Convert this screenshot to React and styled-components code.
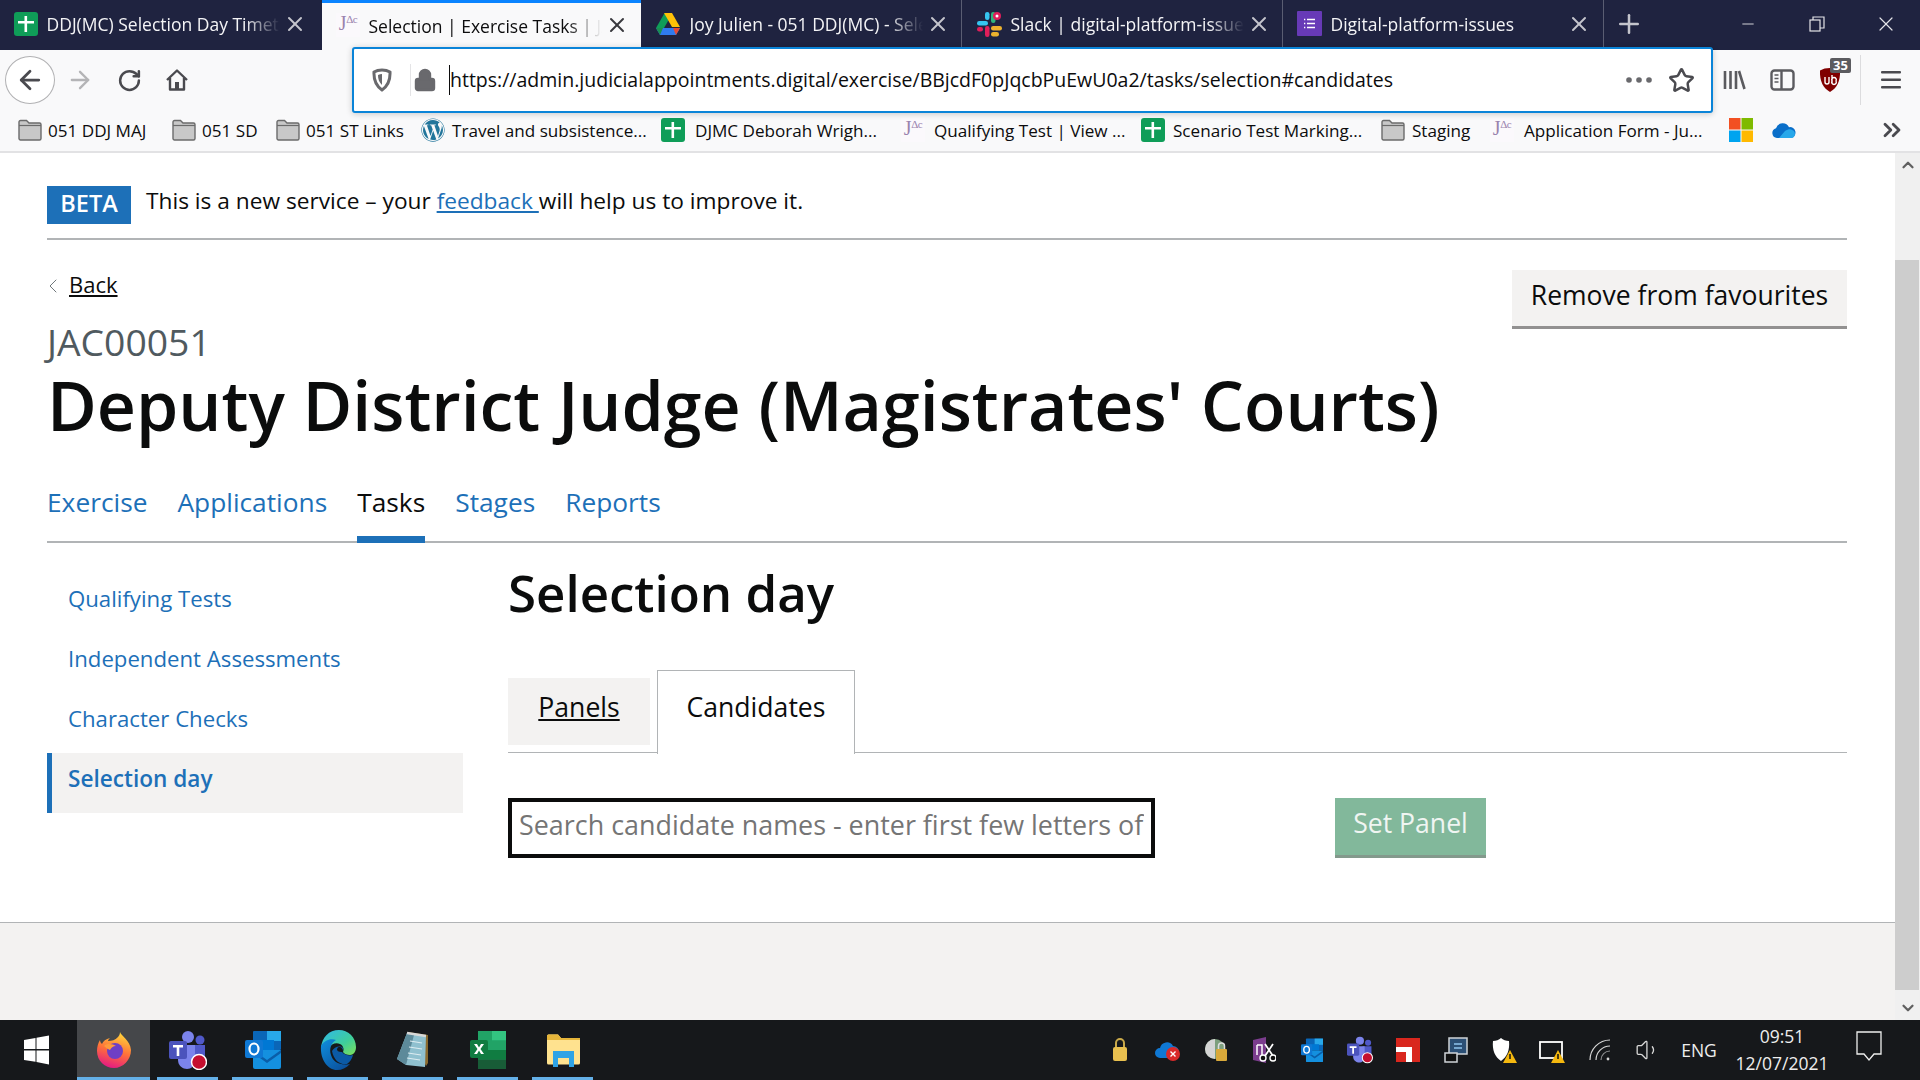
import styled, { createGlobalStyle } from "styled-components";
import { ArrowLeft, ArrowRight, RotateCw, Star, X, Plus, Minus, ChevronsRight, Lock, ChevronUp, ChevronDown, ChevronLeft, Volume1 } from "lucide-react";
import { FaWordpress } from "react-icons/fa";

const GlobalStyle = createGlobalStyle`
  html, body {
    margin: 0;
    height: 100%;
    overflow: hidden;
    font-family: "Open Sans", "Liberation Sans", sans-serif;
    color: #0b0c0c;
  }
  * { box-sizing: border-box; }
  a { text-decoration: none; }
`;

const Screen = styled.div`
  width: 1920px;
  height: 1080px;
  display: flex;
  flex-direction: column;
  overflow: hidden;
`;

/* browser tabs */
const TabStrip = styled.div`
  height: 50px;
  background: #1f2340;
  display: flex;
  flex-shrink: 0;
  color: #f4f4f6;
`;
const BrowserTab = styled.div`
  width: ${(p) => p.$w}px;
  height: ${(p) => (p.$active ? 50 : 47)}px;
  padding-left: 14px;
  padding-bottom: ${(p) => (p.$active ? 3 : 0)}px;
  display: flex;
  align-items: center;
  position: relative;
  font-size: 17.5px;
  background: ${(p) => (p.$active ? "#f9f9fa" : "transparent")};
  color: ${(p) => (p.$active ? "#0c0c0d" : "#f4f4f6")};
  border-top: ${(p) => (p.$active ? "3px solid #0a84ff" : "none")};
  border-right: ${(p) => (p.$active || p.$first ? "none" : "1px solid #5a5d72")};
`;
const TabTitle = styled.span`
  margin-left: 8.5px;
  width: 233px;
  padding-top: 1px;
  white-space: nowrap;
  overflow: hidden;
  -webkit-mask-image: linear-gradient(to right, #000 85%, transparent 100%);
`;
const TabClose = styled.span`
  margin-left: 3px;
  display: flex;
  color: ${(p) => (p.$active ? "#38383d" : "#c4c5cc")};
`;
const NewTab = styled.div`
  width: 50px;
  display: flex;
  align-items: center;
  justify-content: center;
  color: #c4c5cc;
  height: 47px;
`;
const WindowControls = styled.div`
  margin-left: auto;
  display: flex;
`;
const WindowButton = styled.div`
  width: 69px;
  height: 47px;
  display: flex;
  align-items: center;
  justify-content: center;
  color: #e4e4e8;
`;

/* url bar row */
const Toolbar = styled.div`
  height: 55px;
  flex-shrink: 0;
  background: #f9f9fa;
  display: flex;
  align-items: center;
  padding: 5px 0 0 5px;
  color: #5b5b5f;
  position: relative;
`;
const BackCircle = styled.div`
  width: 50px;
  height: 48px;
  border-radius: 50%;
  border: 1px solid #b1b1b3;
  background: #fff;
  display: flex;
  align-items: center;
  justify-content: center;
  color: #4a4a4f;
`;
const ToolButton = styled.div`
  width: ${(p) => p.$w || 48}px;
  display: flex;
  align-items: center;
  justify-content: center;
  color: ${(p) => p.$color || "#5b5b5f"};
  position: relative;
`;
const UrlBar = styled.div`
  position: absolute;
  left: 352px;
  top: -3px;
  width: 1361px;
  height: 66px;
  background: #fff;
  border: 2px solid #0a84d8;
  border-radius: 3px;
  box-shadow: 0 1px 6px rgba(0, 0, 0, 0.2);
  display: flex;
  align-items: center;
  z-index: 2;
`;
const UrlIcon = styled.span`
  width: ${(p) => p.$w}px;
  display: flex;
  justify-content: center;
  color: #69696d;
`;
const UrlDivider = styled.span`
  width: 1px;
  height: 32px;
  background: #e4e4e6;
`;
const UrlText = styled.div`
  flex: 1;
  margin-left: 10px;
  border-left: 1px solid #0c0c0d;
  font-size: 19.5px;
  line-height: 30px;
  color: #0c0c0d;
  white-space: nowrap;
`;
const ToolGroup = styled.div`
  margin-left: auto;
  display: flex;
  align-items: center;
  width: 210px;
`;
const Badge = styled.span`
  position: absolute;
  top: -9px;
  left: 24px;
  background: #5b5b5f;
  color: #fff;
  font-size: 13px;
  font-weight: 700;
  line-height: 15px;
  padding: 0 3px;
  border-radius: 2px;
`;
const ToolDivider = styled.span`
  width: 1px;
  height: 50px;
  background: #dcdcde;
  margin-left: 6px;
`;

/* bookmarks */
const BookmarkBar = styled.div`
  height: 48px;
  flex-shrink: 0;
  background: #f9f9fa;
  border-bottom: 2px solid #e2e2e4;
  display: flex;
  align-items: center;
  padding: 4px 0 0 18px;
  font-size: 17.1px;
  color: #0c0c0d;
`;
const Bookmark = styled.div`
  width: ${(p) => p.$w}px;
  display: flex;
  align-items: center;
  gap: ${(p) => p.$gap || 6}px;
  white-space: nowrap;
`;

/* page */
const Viewport = styled.div`
  flex: 1;
  display: flex;
  min-height: 0;
  background: #fff;
`;
const Page = styled.div`
  flex: 1;
  display: flex;
  flex-direction: column;
`;
const Wrapper = styled.div`
  flex: 1;
  padding: 33px 48px 0 47px;
`;
const PhaseBanner = styled.div`
  display: flex;
  align-items: flex-start;
  gap: 15px;
  padding-bottom: 14px;
  border-bottom: 2px solid #b1b4b6;
  font-size: 22.7px;
  line-height: 30px;
`;
const PhaseTag = styled.strong`
  background: #1d70b8;
  color: #fff;
  width: 84px;
  height: 38px;
  display: flex;
  align-items: center;
  justify-content: center;
  padding-bottom: 5px;
  font-size: 23.5px;
  font-weight: 600;
`;
const BlueLink = styled.a`
  color: #1d70b8;
  text-decoration: underline;
`;
const FavouriteButton = styled.button`
  float: right;
  margin-top: 30px;
  width: 335px;
  height: 59px;
  padding: 0 0 6px;
  background: #f3f2f1;
  border: none;
  border-bottom: 3px solid #929191;
  color: #0b0c0c;
  font-family: inherit;
  font-size: 26.5px;
`;
const BackLink = styled.a`
  padding-top: 28px;
  height: 60px;
  margin-bottom: 2px;
  display: flex;
  align-items: center;
  gap: 4px;
  font-size: 22px;
  color: #0b0c0c;
  span { text-decoration: underline; }
  svg { color: #6f777b; margin: 4px 0 0 -6px; }
`;
const Caption = styled.div`
  margin-top: 17px;
  font-size: 37.3px;
  line-height: 50px;
  color: #505a5f;
`;
const Title = styled.h1`
  margin: -2px 0 0;
  font-size: 68px;
  line-height: 80px;
  font-weight: 600;
  white-space: nowrap;
`;
const MainNav = styled.nav`
  margin-top: 30px;
  height: 68px;
  display: flex;
  gap: 30px;
  box-shadow: inset 0 -2px 0 #b1b4b6;
`;
const NavItem = styled.a`
  height: 68px;
  font-size: 26.3px;
  line-height: 54px;
  color: ${(p) => (p.$active ? "#0b0c0c" : "#1d70b8")};
  border-bottom: 7px solid ${(p) => (p.$active ? "#1d70b8" : "transparent")};
`;
const Columns = styled.div`
  display: grid;
  grid-template-columns: 416px 1fr;
  column-gap: 45px;
`;
const SideNav = styled.div`
  padding-top: 30px;
`;
const SideItem = styled.a`
  display: block;
  height: 60px;
  padding: 8px 0 0 16px;
  line-height: 36px;
  font-size: ${(p) => (p.$active ? 22.6 : 22.2)}px;
  color: #1d70b8;
  font-weight: ${(p) => (p.$active ? 600 : 400)};
  background: ${(p) => (p.$active ? "#f3f2f1" : "transparent")};
  border-left: 5px solid ${(p) => (p.$active ? "#1d70b8" : "transparent")};
`;
const SectionTitle = styled.h2`
  margin: 14px 0 0;
  font-size: 51px;
  line-height: 70px;
  font-weight: 600;
`;
const TabList = styled.div`
  margin-top: 43px;
  height: 83px;
  display: flex;
  align-items: flex-start;
  gap: 7px;
  box-shadow: inset 0 -1px 0 0 #b1b4b6;
`;
const PanelTab = styled.a`
  margin-top: 8px;
  width: 142px;
  height: 67px;
  background: #f3f2f1;
  display: flex;
  justify-content: center;
  padding-top: 10px;
  font-size: 26.6px;
  line-height: 38px;
  color: #0b0c0c;
  text-decoration: underline;
`;
const ActivePanelTab = styled.a`
  width: 198px;
  height: 84px;
  background: #fff;
  border: 1px solid #b1b4b6;
  border-bottom: none;
  display: flex;
  justify-content: center;
  padding-top: 17px;
  font-size: 26.6px;
  line-height: 38px;
  color: #0b0c0c;
`;
const SearchRow = styled.div`
  margin-top: 45px;
  display: flex;
  gap: 180px;
`;
const SearchInput = styled.input`
  width: 647px;
  height: 60px;
  border: 4px solid #0b0c0c;
  padding: 0 7px 8px;
  font-family: inherit;
  font-size: 26.9px;
  outline: none;
  &::placeholder { color: #757575; opacity: 1; }
`;
const SetPanelButton = styled.button`
  width: 151px;
  height: 60px;
  background: #82b89b;
  border: none;
  border-bottom: 3px solid #83998c;
  padding: 0 0 8px;
  color: #f0f5f2;
  font-family: inherit;
  font-size: 26.6px;
`;
const Footer = styled.div`
  height: 98px;
  flex-shrink: 0;
  background: #f3f2f1;
  border-top: 1px solid #b1b4b6;
`;
const Scrollbar = styled.div`
  width: 25px;
  background: #f0f0f0;
  display: flex;
  flex-direction: column;
  color: #606060;
`;
const ScrollArrow = styled.div`
  height: 24px;
  display: flex;
  align-items: center;
  justify-content: center;
  margin-top: ${(p) => (p.$bottom ? "auto" : 0)};
`;
const ScrollThumb = styled.div`
  margin: ${(p) => p.$top}px 1px 0 0;
  height: 730px;
  background: #cdcdcd;
`;

/* windows taskbar */
const Taskbar = styled.div`
  height: 60px;
  flex-shrink: 0;
  background: #16181b;
  display: flex;
  color: #eee;
`;
const StartButton = styled.div`
  width: 77px;
  display: flex;
  align-items: center;
  justify-content: center;
  padding-right: 5px;
`;
const TaskItem = styled.div`
  width: ${(p) => (p.$active ? 73 : 75)}px;
  display: flex;
  align-items: center;
  justify-content: center;
  position: relative;
  background: ${(p) => (p.$active ? "#45474a" : "transparent")};
  &::after {
    content: "";
    position: absolute;
    bottom: 0;
    height: 3px;
    left: ${(p) => (p.$active ? 0 : 7)}px;
    right: ${(p) => (p.$active ? 0 : 7)}px;
    background: #64b0e8;
  }
`;
const Tray = styled.div`
  margin-left: auto;
  display: flex;
  align-items: center;
  padding-right: 20px;
`;
const TrayIcon = styled.div`
  width: 48px;
  display: flex;
  justify-content: center;
`;
const TrayText = styled.div`
  width: ${(p) => p.$w}px;
  text-align: center;
  font-size: 17.5px;
  line-height: 27px;
  color: #eee;
`;

/* inline drawings */
const SheetIcon = ({ size = 24 }) => (
  <svg width={size} height={size} viewBox="0 0 24 24">
    <rect width="24" height="24" rx="3" fill="#0f9d58" />
    <path d="M10.500 4h2.600v5H20v2.600h-6.900V20h-2.600v-8.400H4V9h6.500z" fill="#fff" />
  </svg>
);
const DriveIcon = () => (
  <svg width="26" height="24" viewBox="0 0 26 24">
    <path d="M9 1h8l-8 14H1z" fill="#0f9d58" transform="translate(0 1)" />
    <path d="M9 1h8l8 14h-8z" fill="#ffc107" />
    <path d="M1 16h24l-4 7H5z" fill="#2f7bf0" />
    <path d="M1 16h7l-3 7z" fill="#1a8f50" />
    <path d="M18 16h7l-4 7z" fill="#e64a35" />
  </svg>
);
const SlackIcon = () => (
  <svg width="26" height="26" viewBox="0 0 26 26">
    <rect x="1" y="10" width="11" height="4.500" rx="2.200" fill="#36c5f0" />
    <rect x="9" y="1" width="4.500" height="8" rx="2.200" fill="#36c5f0" />
    <rect x="15" y="1" width="4.500" height="11" rx="2.200" fill="#2eb67d" />
    <circle cx="21" cy="5" r="4" fill="#e01e5a" />
    <circle cx="21" cy="5" r="1.500" fill="#fff" />
    <rect x="15" y="15" width="11" height="4.500" rx="2.200" fill="#ecb22e" />
    <rect x="15" y="21" width="8" height="4.500" rx="2.200" fill="#ecb22e" />
    <rect x="9" y="15" width="4.500" height="11" rx="2.200" fill="#e01e5a" />
    <rect x="1" y="16" width="6" height="4.500" rx="2.200" fill="#e01e5a" />
  </svg>
);
const FormsIcon = () => (
  <svg width="25" height="25" viewBox="0 0 25 25">
    <rect width="25" height="25" rx="1" fill="#673ab7" />
    <path d="M10 8.500h8M10 12.500h8M10 16.500h8" stroke="#fff" strokeWidth="1.300" />
    <path d="M7 8.500h1.300M7 12.500h1.300M7 16.500h1.300" stroke="#fff" strokeWidth="1.300" />
  </svg>
);
const JacLogo = styled.span`
  width: 24px;
  height: 24px;
  display: inline-flex;
  align-items: flex-start;
  justify-content: center;
  font-family: "Liberation Serif", serif;
  font-size: 20px;
  line-height: 20px;
  color: #9a83ae;
  background: #fbf9fc;
  flex-shrink: 0;
  letter-spacing: -0.5px;
`;
const JacSup = styled.span`
  font-size: 11px;
  line-height: 12px;
`;
const Jac = () => (
  <JacLogo>
    J<JacSup>Δc</JacSup>
  </JacLogo>
);
const FolderIcon = () => (
  <svg width="24" height="22" viewBox="0 0 24 22">
    <path d="M1 5V3a1.500 1.500 0 0 1 1.500-1.500h6L11 4h10.500A1.500 1.500 0 0 1 23 5.500v14a1.500 1.500 0 0 1-1.500 1.500h-19A1.500 1.500 0 0 1 1 19.500z" fill="#c8c8c8" stroke="#6b6b6b" strokeWidth="1.400" />
    <path d="M1 6.500h22" stroke="#6b6b6b" strokeWidth="1.200" />
  </svg>
);
const ShieldIcon = () => (
  <svg width="20" height="24" viewBox="0 0 20 24" fill="none">
    <path d="M10 2c3 0 6 .8 8 2 .4 8-2 14-8 18C4 18 1.600 12 2 4c2-1.200 5-2 8-2z" stroke="#69696d" strokeWidth="3" />
    <path d="M10 6v11c-3-3-4-6-4-10 1.400-.6 2.700-1 4-1z" fill="#69696d" />
  </svg>
);
const HomeIcon = () => (
  <svg width="24" height="24" viewBox="0 0 24 24" fill="none" stroke="#4a4a4f" strokeWidth="2.400" strokeLinejoin="round">
    <path d="M2 12 12 2.500 22 12M5 10v11.500h14V10" />
    <rect x="10" y="14" width="4" height="7" fill="#4a4a4f" stroke="none" />
  </svg>
);
const LibraryIcon = () => (
  <svg width="24" height="24" viewBox="0 0 24 24" stroke="#5b5b5f" strokeWidth="2.600" fill="none">
    <path d="M3 3v18M8.500 3v18M14 3v18M17 3l5.500 18" />
  </svg>
);
const SidebarIcon = () => (
  <svg width="25" height="22" viewBox="0 0 25 22" fill="none">
    <rect x="1.500" y="1.500" width="22" height="19" rx="3" stroke="#5b5b5f" strokeWidth="2.400" />
    <path d="M11.500 2v18" stroke="#5b5b5f" strokeWidth="2.400" />
    <path d="M4.500 6h4M4.500 9.500h4M4.500 13h4" stroke="#5b5b5f" strokeWidth="1.500" />
  </svg>
);
const UblockIcon = () => (
  <svg width="22" height="26" viewBox="0 0 22 26">
    <path d="M11 1c4 0 7 .8 10 2.500C21.500 14 18 21 11 25 4 21 .5 14 1 3.500 4 1.800 7 1 11 1z" fill="#800000" />
    <path d="M6 10v5a2 2 0 0 0 4 0v-5M13 8v8M13 14a2.300 2.300 0 1 0 4 0a2.300 2.300 0 1 0-4 0" stroke="#fff" strokeWidth="1.400" fill="none" />
  </svg>
);
const MenuIcon = () => (
  <svg width="20" height="18" viewBox="0 0 20 18" fill="#4a4a4f">
    <rect width="20" height="2.600" rx="1" />
    <rect y="7.500" width="20" height="2.600" rx="1" />
    <rect y="15" width="20" height="2.600" rx="1" />
  </svg>
);
const MsIcon = () => (
  <svg width="24" height="24" viewBox="0 0 24 24">
    <rect width="11.500" height="11.500" fill="#f25022" />
    <rect x="12.500" width="11.500" height="11.500" fill="#7fba00" />
    <rect y="12.500" width="11.500" height="11.500" fill="#00a4ef" />
    <rect x="12.500" y="12.500" width="11.500" height="11.500" fill="#ffb900" />
  </svg>
);
const CloudIcon = ({ w = 25 }) => (
  <svg width={w} height={w * 0.68} viewBox="0 0 25 17">
    <path d="M6 16a5 5 0 0 1-1-9.800 7 7 0 0 1 13-1A5 5 0 0 1 20 16z" fill="#0a6fc9" />
    <path d="M8 16l6-7c3-2 6-2 7-1a4.200 4.200 0 0 1 0 8z" fill="#28a8ea" />
  </svg>
);
const WindowsLogo = () => (
  <svg width="25" height="30" viewBox="0 0 25 30" fill="#fff">
    <path d="M0 5l11.500-2v11H0zM12.500 2.800 25 .5V14H12.500zM0 15.500h11.500v11.300L0 25zM12.500 15.500H25V29.500L12.500 27z" />
  </svg>
);
const FirefoxIcon = () => (
  <svg width="36" height="38" viewBox="0 0 36 38">
    <defs>
      <linearGradient id="ffx" x1="0.600" y1="0" x2="0.300" y2="1">
        <stop offset="0" stopColor="#ffd43a" />
        <stop offset="0.5" stopColor="#ff7139" />
        <stop offset="1" stopColor="#e31587" />
      </linearGradient>
    </defs>
    <path d="M24 1c1 4 10 8 11 18 0 10-8 18-17 18S1 30 1 20c0-4 1-8 3-11 0 2 1 3 2 4 1-3 4-5 8-6-1 1-2 2-2 3 4 0 7-1 10-4 1-1 2-3 2-5z" fill="url(#ffx)" />
    <circle cx="19" cy="20" r="8" fill="#6e3fc5" />
    <path d="M8 15c3-3 9-2 12 0-3 0-5 2-6 4-2-1-4-2-6-4z" fill="#ff9a3c" />
  </svg>
);
const TeamsIcon = ({ s = 1 }) => (
  <svg width={38 * s} height={40 * s} viewBox="0 0 38 40">
    <circle cx="19" cy="7" r="6" fill="#7b83eb" />
    <circle cx="31" cy="10" r="4.500" fill="#5059c9" />
    <path d="M23 15h13v12c0 4-3 6-6 6s-7-3-7-6z" fill="#5059c9" />
    <path d="M9 15h17v15c0 6-4 9-8 9s-9-3-9-9z" fill="#7b83eb" />
    <rect y="11" width="18" height="18" rx="2" fill="#4b53bc" />
    <path d="M4 15h10v2.500h-3.700V26H7.700v-8.500H4z" fill="#fff" />
    <circle cx="30" cy="32" r="7.500" fill="#c50f2f" stroke="#fff" strokeWidth="1.500" />
  </svg>
);
const OutlookIcon = ({ s = 1 }) => (
  <svg width={36 * s} height={40 * s} viewBox="0 0 36 40">
    <rect x="8" y="1" width="28" height="19" rx="1" fill="#0a66b8" />
    <rect x="22" y="1" width="14" height="10" fill="#28a8ea" />
    <rect x="15" y="10" width="14" height="10" fill="#0078d4" />
    <path d="M8 20h28v17a2 2 0 0 1-2 2H10a2 2 0 0 1-2-2z" fill="#1490df" />
    <path d="M8 20l14 10 14-10v3L22 33 8 23z" fill="#0a5ea8" />
    <rect y="10" width="18" height="18" rx="2" fill="#0f78d4" />
    <ellipse cx="9" cy="19" rx="4.500" ry="5.500" fill="none" stroke="#fff" strokeWidth="2.200" />
  </svg>
);
const EdgeIcon = () => (
  <svg width="36" height="42" viewBox="0 0 36 42">
    <defs>
      <linearGradient id="edg" x1="0" y1="0" x2="1" y2="1">
        <stop offset="0" stopColor="#2fb8ec" />
        <stop offset="0.6" stopColor="#3fce9a" />
        <stop offset="1" stopColor="#7fe05a" />
      </linearGradient>
      <linearGradient id="edb" x1="0" y1="0" x2="0.800" y2="1">
        <stop offset="0" stopColor="#0f8fdd" />
        <stop offset="1" stopColor="#0a4f9c" />
      </linearGradient>
    </defs>
    <path d="M1 19C2 8 9 1 19 1c9 0 17 7 17 17 0 4-2 8-6 8-3 0-6-1-7-3 1-2 1-6-3-8-4-2-9 0-11 4-2 3-6 4-8 0z" fill="url(#edg)" />
    <path d="M1 17c3-6 10-8 15-6-5 3-7 9-5 15 2 7 9 11 19 9-4 4-8 6-13 6C8 41 0 31 1 17z" fill="url(#edb)" />
    <path d="M12 22c2-4 8-6 11-3 0 2 0 3-1 4 2 3 8 4 11 3-1 4-3 7-6 9-7 1-13-3-15-13z" fill="#0b5aa6" />
    <path d="M19 18c3 0 4 2 4 5-2 0-5 0-6-2 0-2 1-3 2-3z" fill="#16181b" />
  </svg>
);
const NotepadIcon = () => (
  <svg width="34" height="38" viewBox="0 0 34 38">
    <path d="M12 1l20 3v28l-2 3z" fill="#8a6a2f" />
    <path d="M11 2l19 3-1 31-19-2-9-6z" fill="#8fc0cf" />
    <path d="M11 2l-10 26 9 6 8-30z" fill="#5d8a9a" />
    <path d="M14 10l12 2M13 16l13 2M12 22l13 2M11 27l13 2" stroke="#dcecf1" strokeWidth="1.200" />
    <path d="M11 2l19 3" stroke="#d8d8d8" strokeWidth="2.500" />
  </svg>
);
const ExcelIcon = () => (
  <svg width="36" height="40" viewBox="0 0 36 40">
    <rect x="8" y="1" width="28" height="38" rx="1.500" fill="#21a366" />
    <rect x="22" y="1" width="14" height="9.500" fill="#33c481" />
    <rect x="8" y="1" width="14" height="9.500" fill="#21a366" />
    <rect x="22" y="10.500" width="14" height="9.500" fill="#21a366" />
    <rect x="8" y="20" width="14" height="9.500" fill="#107c41" />
    <rect x="22" y="20" width="14" height="9.500" fill="#107c41" />
    <rect x="8" y="29.500" width="28" height="9.500" fill="#185c37" />
    <rect y="10" width="18" height="18" rx="2" fill="#107c41" />
    <path d="M4 14h3l2 3.500 2-3.500h3l-3.500 5 3.500 5h-3l-2-3.500L7 24H4l3.500-5z" fill="#fff" />
  </svg>
);
const ExplorerIcon = () => (
  <svg width="34" height="34" viewBox="0 0 34 34">
    <path d="M1 3a1.500 1.500 0 0 1 1.500-1.500H12L15 5h17.500A1.500 1.500 0 0 1 34 6.500V30a1.500 1.500 0 0 1-1.500 1.500h-30A1.500 1.500 0 0 1 1 30z" fill="#ffe28f" />
    <path d="M1 3a1.500 1.500 0 0 1 1.500-1.500H12L15 5h19v2H1z" fill="#e6b53a" />
    <path d="M7 34V18h21v16h-5v-9h-11v9z" fill="#2fa3e6" />
  </svg>
);
const TrayLock = () => (
  <svg width="16" height="26" viewBox="0 0 16 26">
    <path d="M4 11V6a4 4 0 0 1 8 0v5" stroke="#c9a94a" strokeWidth="2" fill="none" />
    <rect x="1" y="10" width="14" height="14" rx="2" fill="#e9c04f" />
  </svg>
);
const TrayCloudError = () => (
  <svg width="26" height="24" viewBox="0 0 26 24">
    <path d="M5 20a5 5 0 0 1 0-10 7 7 0 0 1 13-2 5 5 0 0 1 0 12z" fill="#0f78d4" />
    <circle cx="18" cy="16" r="7" fill="#d92a2a" />
    <path d="M15.500 13.500l5 5M20.500 13.500l-5 5" stroke="#fff" strokeWidth="1.400" />
  </svg>
);
const TrayGlobeLock = () => (
  <svg width="24" height="28" viewBox="0 0 24 28">
    <circle cx="11" cy="13" r="10" fill="#7d9f7d" />
    <path d="M11 3a10 10 0 0 0 0 20z" fill="#d5d5d5" />
    <rect x="12" y="13" width="11" height="12" rx="1" fill="#d9a93a" />
    <path d="M14.500 13v-3a3 3 0 0 1 6 0v3" stroke="#ddd" strokeWidth="1.500" fill="none" />
  </svg>
);
const TrayClip = () => (
  <svg width="24" height="28" viewBox="0 0 24 28">
    <path d="M1 4l13-3v26L1 24z" fill="#7b3d8e" />
    <path d="M5 9h5v10M5 9v10" stroke="#fff" strokeWidth="1.500" fill="none" />
    <path d="M13 8l8 12M21 8l-8 12" stroke="#fff" strokeWidth="1.800" />
    <circle cx="11" cy="22" r="3" stroke="#fff" fill="#111" strokeWidth="1.400" />
    <circle cx="21" cy="22" r="3" stroke="#fff" fill="#111" strokeWidth="1.400" />
  </svg>
);
const TrayRed = () => (
  <svg width="24" height="24" viewBox="0 0 24 24">
    <rect width="24" height="24" fill="#d9271e" />
    <path d="M0 9h16v15h-6V14H0z" fill="#fff" />
  </svg>
);
const TrayRemote = () => (
  <svg width="24" height="28" viewBox="0 0 24 28" fill="none">
    <rect x="5" y="2" width="18" height="16" stroke="#cfd3d8" strokeWidth="1.500" fill="#2b4f75" />
    <rect x="1" y="17" width="12" height="9" stroke="#cfd3d8" strokeWidth="1.500" fill="#111" />
    <path d="M10 8h8M10 12h8" stroke="#8ec5ee" strokeWidth="1.500" />
  </svg>
);
const TrayShield = ({ kind }) => (
  <svg width="26" height="26" viewBox="0 0 26 26">
    {kind === "shield" ? (
      <path d="M2 4c3 0 6-1 8-3 2 2 5 3 8 3 1 9-2 16-8 20C4 20 1 13 2 4z" fill="#fff" />
    ) : (
      <rect x="1" y="5" width="22" height="16" fill="none" stroke="#fff" strokeWidth="1.800" />
    )}
    <path d="M19 13l7 13H12z" fill="#f5b80f" />
    <path d="M19 17v5" stroke="#111" strokeWidth="1.500" />
  </svg>
);
const TrayWifi = () => (
  <svg width="24" height="24" viewBox="0 0 24 24" fill="none" stroke="#d8d8d8" strokeWidth="1.200">
    <path d="M2 22A20 20 0 0 1 22 2" />
    <path d="M8 22A14 14 0 0 1 22 8" />
    <path d="M13 22A9 9 0 0 1 22 13" opacity="0.6" />
    <circle cx="20" cy="21" r="1.400" fill="#d8d8d8" stroke="none" />
  </svg>
);
const NotificationIcon = () => (
  <svg width="26" height="32" viewBox="0 0 26 32" fill="none" stroke="#eee" strokeWidth="1.300">
    <path d="M1 1h24v22h-7l-5 6-5-6H1z" />
  </svg>
);

const browserTabs = [
  { w: 322, icon: <SheetIcon />, title: "DDJ(MC) Selection Day Timetable", first: true },
  { w: 319, icon: <Jac />, title: "Selection | Exercise Tasks | JAC Digital", active: true },
  { w: 321, icon: <DriveIcon />, title: "Joy Julien - 051 DDJ(MC) - Selection" },
  { w: 321, icon: <SlackIcon />, title: "Slack | digital-platform-issues | JAC" },
  { w: 321, icon: <FormsIcon />, title: "Digital-platform-issues" },
];

const bookmarks = [
  { w: 154, icon: <FolderIcon />, label: "051 DDJ MAJ" },
  { w: 104, icon: <FolderIcon />, label: "051 SD" },
  { w: 145, icon: <FolderIcon />, label: "051 ST Links" },
  { w: 240, icon: <FaWordpress size={24} color="#21759b" />, label: "Travel and subsistence...", gap: 7 },
  { w: 240, icon: <SheetIcon />, label: "DJMC Deborah Wrigh...", gap: 10 },
  { w: 240, icon: <Jac />, label: "Qualifying Test | View ...", gap: 9 },
  { w: 240, icon: <SheetIcon />, label: "Scenario Test Marking...", gap: 8 },
  { w: 109, icon: <FolderIcon />, label: "Staging", gap: 7 },
  { w: 239, icon: <Jac />, label: "Application Form - Ju...", gap: 10 },
  { w: 42, icon: <MsIcon /> },
  { w: 107, icon: <CloudIcon /> },
];

const taskItems = [
  { icon: <FirefoxIcon />, active: true },
  { icon: <TeamsIcon /> },
  { icon: <OutlookIcon /> },
  { icon: <EdgeIcon /> },
  { icon: <NotepadIcon /> },
  { icon: <ExcelIcon /> },
  { icon: <ExplorerIcon /> },
];

const trayIcons = [
  <TrayLock />,
  <TrayCloudError />,
  <TrayGlobeLock />,
  <TrayClip />,
  <OutlookIcon s={0.62} />,
  <TeamsIcon s={0.68} />,
  <TrayRed />,
  <TrayRemote />,
  <TrayShield kind="shield" />,
  <TrayShield kind="battery" />,
  <TrayWifi />,
  <Volume1 size={26} color="#d8d8d8" strokeWidth={1.2} />,
];

const App = () => {
  return (
    <Screen>
      <GlobalStyle />
      <TabStrip>
        {browserTabs.map((tab) => (
          <BrowserTab key={tab.title} $w={tab.w} $active={tab.active} $first={tab.first}>
            {tab.icon}
            <TabTitle>{tab.title}</TabTitle>
            <TabClose $active={tab.active}>
              <X size={24} strokeWidth={2} />
            </TabClose>
          </BrowserTab>
        ))}
        <NewTab>
          <Plus size={30} strokeWidth={2} />
        </NewTab>
        <WindowControls>
          <WindowButton>
            <Minus size={18} strokeWidth={1.2} />
          </WindowButton>
          <WindowButton>
            <svg width="16" height="16" viewBox="0 0 16 16" fill="none" stroke="#e4e4e8" strokeWidth="1.200">
              <rect x="1" y="4" width="10" height="11" />
              <path d="M4 4V1h11v11h-4" />
            </svg>
          </WindowButton>
          <WindowButton>
            <X size={24} strokeWidth={1.2} />
          </WindowButton>
        </WindowControls>
      </TabStrip>

      <Toolbar>
        <BackCircle>
          <ArrowLeft size={30} strokeWidth={2.2} />
        </BackCircle>
        <ToolButton $color="#b4b4b6" $w={50}>
          <ArrowRight size={28} strokeWidth={2} />
        </ToolButton>
        <ToolButton $w={48}>
          <RotateCw size={25} strokeWidth={2.4} color="#4a4a4f" />
        </ToolButton>
        <ToolButton $w={47}>
          <HomeIcon />
        </ToolButton>
        <UrlBar>
          <UrlIcon $w={56}>
            <ShieldIcon />
          </UrlIcon>
          <UrlDivider />
          <UrlIcon $w={28}>
            <Lock size={24} strokeWidth={2.4} fill="#69696d" />
          </UrlIcon>
          <UrlText>https://admin.judicialappointments.digital/exercise/BBjcdF0pJqcbPuEwU0a2/tasks/selection#candidates</UrlText>
          <UrlIcon $w={42}>
            <svg width="26" height="6" viewBox="0 0 26 6" fill="#69696d">
              <circle cx="3" cy="3" r="2.800" />
              <circle cx="13" cy="3" r="2.800" />
              <circle cx="23" cy="3" r="2.800" />
            </svg>
          </UrlIcon>
          <UrlIcon $w={42}>
            <Star size={27} strokeWidth={2.2} color="#4a4a4f" />
          </UrlIcon>
          <UrlIcon $w={9} />
        </UrlBar>
        <ToolGroup>
          <ToolButton>
            <LibraryIcon />
          </ToolButton>
          <ToolButton>
            <SidebarIcon />
          </ToolButton>
          <ToolButton>
            <UblockIcon />
            <Badge>35</Badge>
          </ToolButton>
          <ToolDivider />
          <ToolButton $w={59}>
            <MenuIcon />
          </ToolButton>
        </ToolGroup>
      </Toolbar>

      <BookmarkBar>
        {bookmarks.map((item, i) => (
          <Bookmark key={i} $w={item.w} $gap={item.gap}>
            {item.icon}
            {item.label}
          </Bookmark>
        ))}
        <ChevronsRight size={28} color="#4a4a4f" strokeWidth={2.4} />
      </BookmarkBar>

      <Viewport>
        <Page>
          <Wrapper>
            <PhaseBanner>
              <PhaseTag>BETA</PhaseTag>
              <span>
                This is a new service – your <BlueLink href="#">feedback </BlueLink>will help us to improve it.
              </span>
            </PhaseBanner>
            <FavouriteButton>Remove from favourites</FavouriteButton>
            <BackLink href="#">
              <ChevronLeft size={24} strokeWidth={1} />
              <span>Back</span>
            </BackLink>
            <Caption>JAC00051</Caption>
            <Title>Deputy District Judge (Magistrates' Courts)</Title>
            <MainNav>
              <NavItem href="#">Exercise</NavItem>
              <NavItem href="#">Applications</NavItem>
              <NavItem href="#" $active>
                Tasks
              </NavItem>
              <NavItem href="#">Stages</NavItem>
              <NavItem href="#">Reports</NavItem>
            </MainNav>
            <Columns>
              <SideNav>
                <SideItem href="#">Qualifying Tests</SideItem>
                <SideItem href="#">Independent Assessments</SideItem>
                <SideItem href="#">Character Checks</SideItem>
                <SideItem href="#" $active>
                  Selection day
                </SideItem>
              </SideNav>
              <div>
                <SectionTitle>Selection day</SectionTitle>
                <TabList>
                  <PanelTab href="#">Panels</PanelTab>
                  <ActivePanelTab href="#">Candidates</ActivePanelTab>
                </TabList>
                <SearchRow>
                  <SearchInput placeholder="Search candidate names - enter first few letters of surname" />
                  <SetPanelButton>Set Panel</SetPanelButton>
                </SearchRow>
              </div>
            </Columns>
          </Wrapper>
          <Footer />
        </Page>
        <Scrollbar>
          <ScrollArrow>
            <ChevronUp size={18} strokeWidth={3} />
          </ScrollArrow>
          <ScrollThumb $top={83} />
          <ScrollArrow $bottom>
            <ChevronDown size={18} strokeWidth={3} />
          </ScrollArrow>
        </Scrollbar>
      </Viewport>

      <Taskbar>
        <StartButton>
          <WindowsLogo />
        </StartButton>
        {taskItems.map((item, i) => (
          <TaskItem key={i} $active={item.active}>
            {item.icon}
          </TaskItem>
        ))}
        <Tray>
          {trayIcons.map((icon, i) => (
            <TrayIcon key={i}>{icon}</TrayIcon>
          ))}
          <TrayText $w={54}>ENG</TrayText>
          <TrayText $w={112}>
            09:51
            <br />
            12/07/2021
          </TrayText>
          <TrayText $w={62}>
            <NotificationIcon />
          </TrayText>
        </Tray>
      </Taskbar>
    </Screen>
  );
};

export default App;
